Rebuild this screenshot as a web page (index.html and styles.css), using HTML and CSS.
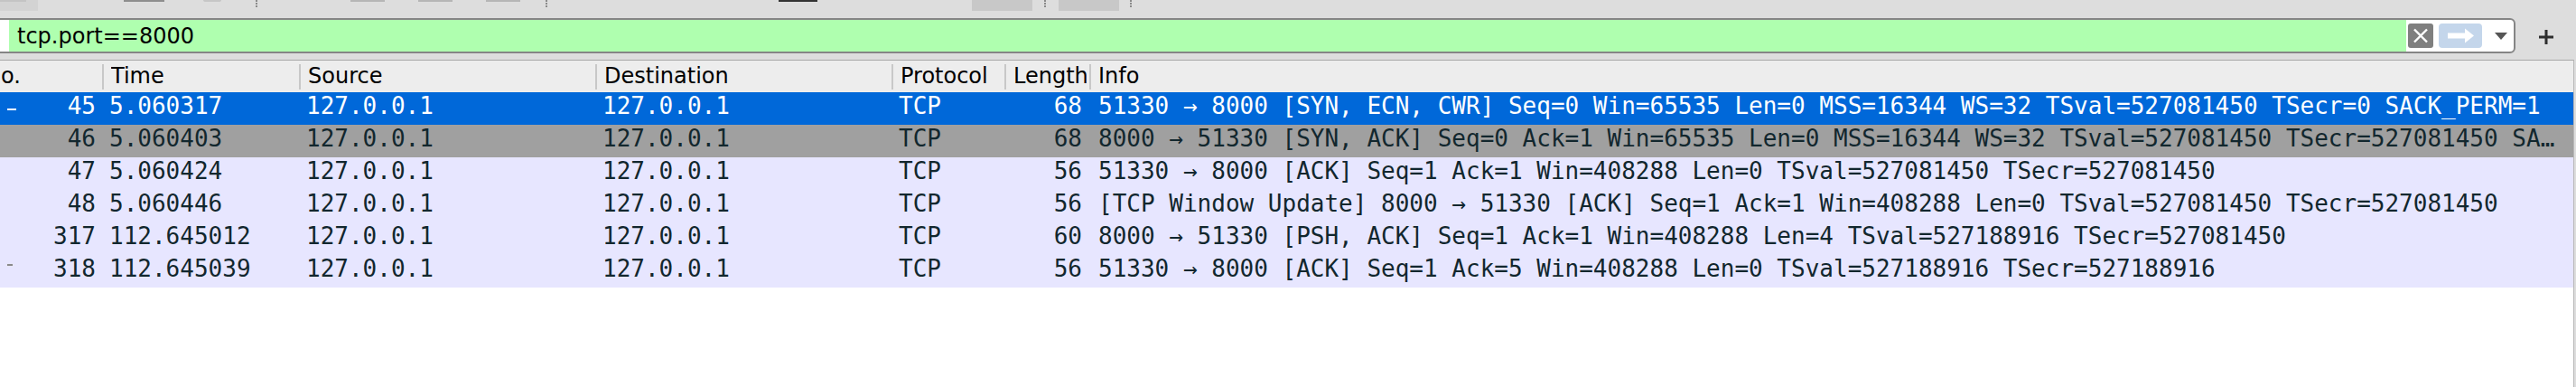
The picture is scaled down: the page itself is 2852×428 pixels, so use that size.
FILE: index.html
```html
<!DOCTYPE html>
<html>
<head>
<meta charset="utf-8">
<link rel="stylesheet" href="styles.css">
</head>
<body>
<div class="window">
  <div class="toolbar">
    <div class="tb tb-open"><div class="tb-open-top"></div></div>
    <div class="tb tb-save"></div>
    <div class="tb tb-round"></div>
    <div class="tb-sep tb-sep1"></div>
    <div class="tb tb-nav tb-nav1"></div>
    <div class="tb tb-nav"></div>
    <div class="tb tb-nav"></div>
    <div class="tb-sep tb-sep2"></div>
    <div class="tb tb-dark"></div>
    <div class="tb tb-box tb-box1"></div>
    <div class="tb-sep tb-sep3"></div>
    <div class="tb tb-box tb-box2"></div>
    <div class="tb-sep tb-sep4"></div>
  </div>

  <div class="filterrow">
    <div class="filter">
      <div class="bookmark"></div>
      <div class="input">tcp.port==8000</div>
      <div class="controls">
        <div class="btn-clear">
          <svg width="28" height="27" viewBox="0 0 28 27"><path d="M7 6.5 L21 20.5 M21 6.5 L7 20.5" stroke="#fff" stroke-width="2.4" fill="none"/></svg>
        </div>
        <div class="btn-apply">
          <svg width="48" height="27" viewBox="0 0 48 27"><path d="M10 10.5 H29 V5.5 L39 13.5 L29 21.5 V16.5 H10 Z" fill="#fff"/></svg>
        </div>
        <div class="dropdown">
          <svg width="14" height="8" viewBox="0 0 14 8"><path d="M0 0 H14 L7 8 Z" fill="#555"/></svg>
        </div>
      </div>
    </div>
    <div class="plus">
      <svg width="16" height="16" viewBox="0 0 16 16"><path d="M6.5 0 H9.5 V6.5 H16 V9.5 H9.5 V16 H6.5 V9.5 H0 V6.5 H6.5 Z" fill="#2e2e2e"/></svg>
    </div>
  </div>

  <div class="list">
    <div class="grid">
      <div class="row head">
        <div class="hc"><span>No.</span></div>
        <div class="hc div"><span>Time</span></div>
        <div class="hc div"><span>Source</span></div>
        <div class="hc div"><span>Destination</span></div>
        <div class="hc div"><span>Protocol</span></div>
        <div class="hc div"><span>Length</span></div>
        <div class="hc div"><span>Info</span></div>
      </div>

      <div class="row sel">
        <div class="c num"><span class="rel rel-first"></span><span>45</span></div>
        <div class="c">5.060317</div>
        <div class="c">127.0.0.1</div>
        <div class="c">127.0.0.1</div>
        <div class="c">TCP</div>
        <div class="c len">68</div>
        <div class="c info">51330 → 8000 [SYN, ECN, CWR] Seq=0 Win=65535 Len=0 MSS=16344 WS=32 TSval=527081450 TSecr=0 SACK_PERM=1</div>
      </div>

      <div class="row gray">
        <div class="c num"><span class="rel"></span><span>46</span></div>
        <div class="c">5.060403</div>
        <div class="c">127.0.0.1</div>
        <div class="c">127.0.0.1</div>
        <div class="c">TCP</div>
        <div class="c len">68</div>
        <div class="c info">8000 → 51330 [SYN, ACK] Seq=0 Ack=1 Win=65535 Len=0 MSS=16344 WS=32 TSval=527081450 TSecr=527081450 SACK_PERM=1</div>
      </div>

      <div class="row tcp">
        <div class="c num"><span class="rel"></span><span>47</span></div>
        <div class="c">5.060424</div>
        <div class="c">127.0.0.1</div>
        <div class="c">127.0.0.1</div>
        <div class="c">TCP</div>
        <div class="c len">56</div>
        <div class="c info">51330 → 8000 [ACK] Seq=1 Ack=1 Win=408288 Len=0 TSval=527081450 TSecr=527081450</div>
      </div>

      <div class="row tcp">
        <div class="c num"><span class="rel"></span><span>48</span></div>
        <div class="c">5.060446</div>
        <div class="c">127.0.0.1</div>
        <div class="c">127.0.0.1</div>
        <div class="c">TCP</div>
        <div class="c len">56</div>
        <div class="c info">[TCP Window Update] 8000 → 51330 [ACK] Seq=1 Ack=1 Win=408288 Len=0 TSval=527081450 TSecr=527081450</div>
      </div>

      <div class="row tcp">
        <div class="c num"><span class="rel"></span><span>317</span></div>
        <div class="c">112.645012</div>
        <div class="c">127.0.0.1</div>
        <div class="c">127.0.0.1</div>
        <div class="c">TCP</div>
        <div class="c len">60</div>
        <div class="c info">8000 → 51330 [PSH, ACK] Seq=1 Ack=1 Win=408288 Len=4 TSval=527188916 TSecr=527081450</div>
      </div>

      <div class="row tcp">
        <div class="c num"><span class="rel rel-last"></span><span>318</span></div>
        <div class="c">112.645039</div>
        <div class="c">127.0.0.1</div>
        <div class="c">127.0.0.1</div>
        <div class="c">TCP</div>
        <div class="c len">56</div>
        <div class="c info">51330 → 8000 [ACK] Seq=1 Ack=5 Win=408288 Len=0 TSval=527188916 TSecr=527188916</div>
      </div>
    </div>
  </div>
</div>
</body>
</html>
```

FILE: styles.css
```css
* { box-sizing: border-box; }

html, body {
  margin: 0;
  padding: 0;
  background: #dddddd;
}

body {
  width: 2852px;
  height: 428px;
  overflow: hidden;
  font-family: "DejaVu Sans", "Liberation Sans", sans-serif;
}

.window {
  display: flex;
  flex-direction: column;
  height: 428px;
}

/* ---------- toolbar remnants ---------- */
.toolbar {
  display: flex;
  align-items: flex-start;
  height: 20px;
  flex: none;
}

.tb { flex: none; }

.tb-open {
  width: 42px;
  height: 12px;
  background: #d3d3d3;
}
.tb-open-top {
  width: 29px;
  height: 2px;
  background: #c4c4c4;
}
.tb-save {
  margin-left: 95px;
  width: 45px;
  height: 2px;
  background: #8e8e8e;
}
.tb-round {
  margin-left: 43px;
  width: 20px;
  height: 2px;
  border-radius: 0 0 8px 8px;
  background: #c6c6c6;
}
.tb-sep {
  flex: none;
  width: 2px;
  height: 8px;
  border-left: 2px dotted #8a8a8a;
}
.tb-sep1 { margin-left: 38px; }
.tb-nav {
  margin-left: 37px;
  width: 38px;
  height: 2px;
  background: #b6b6b6;
}
.tb-nav1 { margin-left: 103px; }
.tb-sep2 { margin-left: 28px; }
.tb-dark {
  margin-left: 256px;
  width: 43px;
  height: 2px;
  background: #333333;
}
.tb-box {
  width: 67px;
  height: 12px;
  background: #c8c8c8;
}
.tb-box1 { margin-left: 171px; }
.tb-sep3 { margin-left: 13px; }
.tb-box2 { margin-left: 14px; }
.tb-sep4 { margin-left: 12px; }

/* ---------- filter bar ---------- */
.filterrow {
  display: flex;
  align-items: flex-start;
  height: 46px;
  flex: none;
}

.filter {
  display: flex;
  width: 2795px;
  height: 39px;
  margin-left: -10px;
  border: 2px solid #858585;
  border-radius: 6px;
  background: #ffffff;
  overflow: hidden;
}

.bookmark {
  width: 18px;
  flex: none;
  background: #ffffff;
}

.input {
  flex: 1;
  background: #afffaf;
  font-size: 24px;
  line-height: 35px;
  padding-top: 1px;
  padding-left: 9px;
  color: #000000;
}

.controls {
  display: flex;
  align-items: center;
  width: 119px;
  flex: none;
  padding-left: 2px;
}

.btn-clear {
  width: 28px;
  height: 27px;
  background: #7f7f7f;
  border-radius: 3px;
  display: flex;
}

.btn-apply {
  margin-left: 6px;
  width: 48px;
  height: 27px;
  background: #c4d6eb;
  border-radius: 4px;
  display: flex;
}

.dropdown {
  margin-left: 14px;
  width: 14px;
  height: 8px;
  display: flex;
}

.plus {
  margin-left: 26px;
  margin-top: 13px;
  width: 16px;
  height: 16px;
  display: flex;
}

/* ---------- packet list ---------- */
.list {
  flex: 1;
  width: 2850px;
  background: #ffffff;
  border-top: 1px solid #a8a8a8;
  border-right: 1px solid #b9b9b9;
  overflow: hidden;
}

.grid {
  margin-left: -27px;
}

.row {
  display: grid;
  grid-template-columns: 140px 218px 328px 328px 125px 94px 1643px;
  height: 36px;
  white-space: nowrap;
}

.head {
  height: 35px;
  background: #ededed;
  font-size: 24px;
  line-height: 35px;
  color: #000000;
}

.hc {
  padding-left: 10px;
  padding-right: 3px;
  overflow: hidden;
}

.hc span {
  display: block;
  overflow: hidden;
}

.hc.div {
  background: linear-gradient(#c8c8c8, #c8c8c8) left center / 2px 28px no-repeat;
}

.c {
  font-family: "DejaVu Sans Mono", "Liberation Mono", monospace;
  font-size: 26px;
  line-height: 30px;
  padding-left: 8px;
  overflow: hidden;
}

.num {
  display: flex;
  justify-content: space-between;
  align-items: flex-start;
  padding-right: 7px;
}

.len {
  text-align: right;
  padding-right: 8px;
}

.info {
  padding-left: 10px;
  padding-right: 12px;
  text-overflow: ellipsis;
}

.rel {
  margin-left: 27px;
  margin-top: 18px;
  width: 10px;
  height: 2px;
}
.rel-first { background: #ffffff; }
.rel-last { background: #8a8a8a; width: 6px; margin-top: 10px; }

.sel { background: #0068d9; color: #ffffff; }
.gray { background: #a0a0a0; color: #12272e; }
.tcp { background: #e7e6ff; color: #12272e; }
```
